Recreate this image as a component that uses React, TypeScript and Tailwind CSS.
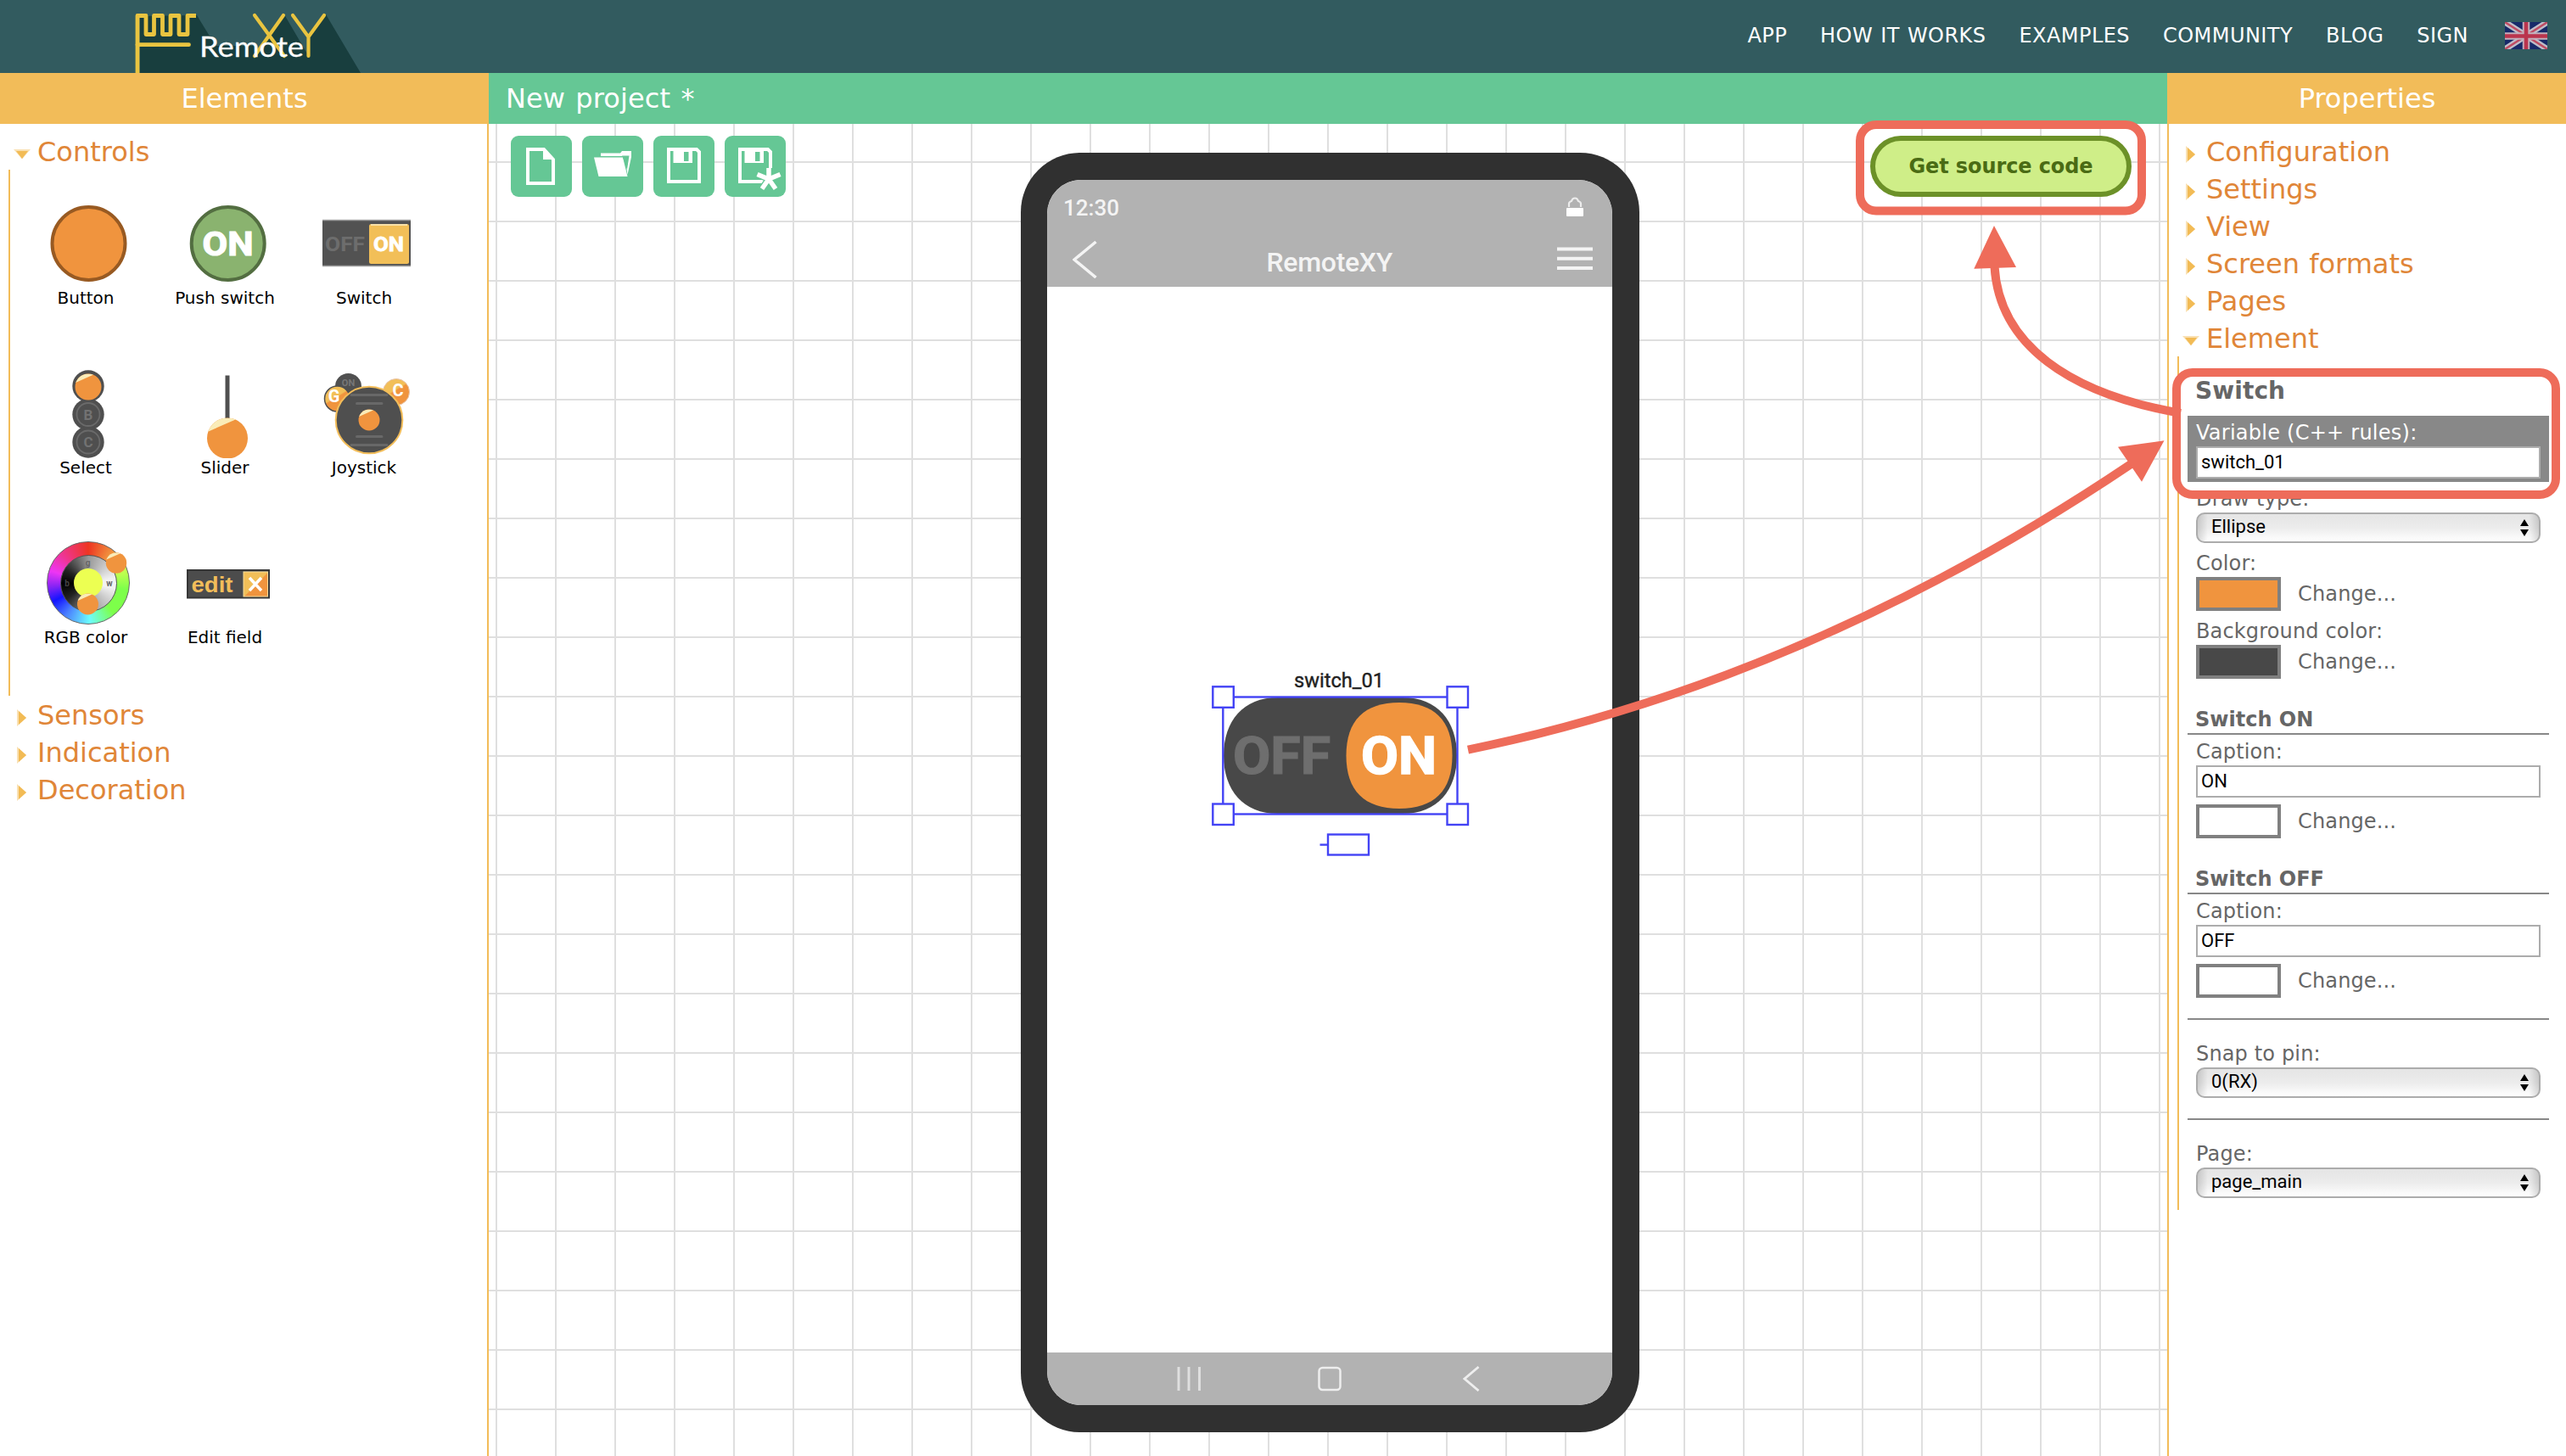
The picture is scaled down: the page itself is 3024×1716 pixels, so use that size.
import React from "react";

const ORANGE = "#f0943e";

function Logo() {
  return (
    <svg width="290" height="86" viewBox="150 0 290 86" className="block">
      <g fill="#183e3e">
        <path d="M165 19 L232 18 L254 54 L300 54 L305 60 L316 42 L300 18 L318 40 L335 17 L363 65 L363 44 L345 18 L365 41 L384 17 L425 86 L165 86 Z" />
      </g>
      <g fill="none" stroke="#e9c440" strokeWidth="4.8" strokeLinejoin="round">
        <path d="M162 86 V18.5 H172 V40.5 H181.5 V18.5 H191.5 V40.5 H201 V18.5 H211 V40.5 H221 V18.5 H231" />
        <path d="M162 52.7 H222.5" strokeLinecap="round" />
      </g>
      <g fill="none" stroke="#e9c440" strokeWidth="4.2" strokeLinecap="round">
        <path d="M300 18 L335 66 M334 18 L300 66" />
        <path d="M345 18 L363.5 43.5 L382 18 M363.5 43.5 V66" />
      </g>
      <text x="235" y="66.5" fontFamily="Lato, sans-serif" fontSize="33" fill="#fff" stroke="#fff" strokeWidth=".3" textLength="123" lengthAdjust="spacingAndGlyphs">Remote</text>
    </svg>
  );
}

function Flag() {
  return (
    <svg width="50" height="32" viewBox="0 0 50 32" className="block opacity-90">
      <rect width="50" height="32" fill="#15256b" />
      <path d="M0 0 L50 32 M50 0 L0 32" stroke="#cfc8d4" strokeWidth="7" />
      <path d="M0 0 L50 32 M50 0 L0 32" stroke="#cf4a63" strokeWidth="2.4" />
      <path d="M25 0 V32 M0 16.5 H50" stroke="#d3b9c6" strokeWidth="8.5" />
      <path d="M25 0 V32 M0 16.5 H50" stroke="#c9304c" strokeWidth="4.6" />
    </svg>
  );
}

function Section({ label, open = false }: { label: string; open?: boolean }) {
  return (
    <div className="flex h-[44px] items-start pl-4 text-[32px] leading-[44px] text-[#e08638]">
      <svg width="20" height="44" viewBox="0 0 20 44" className="mr-2 shrink-0">
        {open ? (
          <>
            <path d="M0 19 H20 L10 30.500 Z" fill="#f2bb55" opacity=".45" />
            <path d="M3 21 H17 L10 30 Z" fill="#f2bb55" />
          </>
        ) : (
          <>
            <path d="M4 15 L15 25 L4 35 Z" fill="#f2bb55" opacity=".45" />
            <path d="M6 17 L15 25 L6 33 Z" fill="#f2bb55" />
          </>
        )}
      </svg>
      <span className="whitespace-nowrap [word-spacing:1px]">{label}</span>
    </div>
  );
}

function Ball({ cx, cy, r, id }: { cx: number; cy: number; r: number; id: string }) {
  return (
    <g>
      <clipPath id={id}>
        <circle cx={cx} cy={cy} r={r} />
      </clipPath>
      <circle cx={cx} cy={cy} r={r} fill={ORANGE} />
      <path
        clipPath={`url(#${id})`}
        d={`M${cx - r} ${cy - r} H${cx + r * 0.6} L${cx + r * 0.3} ${cy - r * 0.88} L${cx - r} ${cy - r * 0.3} Z`}
        fill="#faecb8"
      />
    </g>
  );
}

const bold = { fontFamily: "Roboto, sans-serif", fontWeight: 700 } as const;

function IconBox({ children }: { children: React.ReactNode }) {
  return (
    <svg width="104" height="104" viewBox="0 0 104 104" className="block">
      {children}
    </svg>
  );
}

function ButtonIcon() {
  return (
    <IconBox>
      <circle cx="52.500" cy="51" r="43" fill={ORANGE} stroke="#985a22" strokeWidth="4" />
    </IconBox>
  );
}

function PushIcon() {
  return (
    <IconBox>
      <circle cx="52.700" cy="51" r="43" fill="#8ab36f" stroke="#536e41" strokeWidth="4" />
      <text x="22.500" y="65.300" {...bold} fontSize="39.500" fill="#fff" stroke="#fff" strokeWidth="1.200" textLength="60" lengthAdjust="spacingAndGlyphs">ON</text>
    </IconBox>
  );
}

function SwitchIcon() {
  return (
    <IconBox>
      <rect y="23" width="104" height="55" fill="#525252" />
      <path d="M0 23.500 H104 M0 77.500 H104" stroke="#a0a0a0" strokeWidth="1.500" />
      <text x="3" y="60" {...bold} fontSize="24" fill="#6d6d6d" textLength="47" lengthAdjust="spacingAndGlyphs">OFF</text>
      <rect x="55" y="28" width="47" height="47" rx="2.500" fill="#f2bf58" />
      <path d="M57 29 H100" stroke="#f9e2a8" strokeWidth="2" />
      <text x="60" y="60" {...bold} fontSize="24" fill="#fff" stroke="#fff" strokeWidth=".8" textLength="36" lengthAdjust="spacingAndGlyphs">ON</text>
    </IconBox>
  );
}

function SelectIcon() {
  return (
    <IconBox>
      <g fill="#4f4f4f">
        <circle cx="52" cy="19" r="18.700" />
        <circle cx="52" cy="52.500" r="18.700" />
        <circle cx="52" cy="85" r="18.700" />
      </g>
      <Ball cx={52} cy={20} r={15.5} id="sel" />
      <g fill="none" stroke="#6a6a6a" strokeWidth="1.800">
        <circle cx="52" cy="52.500" r="13.500" />
        <circle cx="52" cy="85" r="13.500" />
      </g>
      <g {...bold} fontSize="17" fill="#727272" textAnchor="middle">
        <text x="52" y="58.500">B</text>
        <text x="52" y="91">C</text>
      </g>
    </IconBox>
  );
}

function SliderIcon() {
  return (
    <IconBox>
      <rect x="49.500" y="6.500" width="5" height="52" fill="#505050" />
      <Ball cx={52} cy={80.500} r={24} id="sld" />
    </IconBox>
  );
}

function JoystickIcon() {
  return (
    <IconBox>
      <defs>
        <linearGradient id="amber" x1="0" y1="0" x2=".6" y2="1">
          <stop offset=".5" stopColor="#f2bf58" />
          <stop offset=".55" stopColor={ORANGE} />
        </linearGradient>
      </defs>
      <circle cx="30.500" cy="19.500" r="15.500" fill="#505050" />
      <text x="30.500" y="19" {...bold} fontSize="11" fill="#777" textAnchor="middle">ON</text>
      <circle cx="17.500" cy="34" r="15" fill="url(#amber)" stroke="#505050" strokeWidth="1.500" />
      <text x="13.500" y="38" {...bold} fontSize="20" fill="#fff" textAnchor="middle">G</text>
      <circle cx="87" cy="26" r="15.500" fill="url(#amber)" stroke="#e8c3a8" strokeWidth="1" />
      <text x="89" y="31" {...bold} fontSize="20" fill="#fff" textAnchor="middle">C</text>
      <circle cx="55" cy="59" r="39.300" fill="#4f4f4f" stroke="#f2bd5a" strokeWidth="2" />
      <path d="M34 29.500 H76 M40.500 39.500 H70 M40.500 78.500 H70 M34 88.500 H76" stroke="#686868" strokeWidth="3" strokeLinecap="round" />
      <Ball cx={55} cy={59} r={12.5} id="joy" />
    </IconBox>
  );
}

function RgbIcon() {
  return (
    <div className="grid size-[104px]">
      <div className="col-start-1 row-start-1 mt-[2px] ml-[3px] grid size-[98px] place-items-center rounded-full border border-[#666] bg-[conic-gradient(#ee3522,#f0943e_38deg,#c8ff50_70deg,#7dff4a_100deg,#7dff4a_140deg,#6cfcfc_178deg,#4a80ff_215deg,#1414ff_242deg,#8a24f4_265deg,#ee35f4_288deg,#ee3590_318deg,#ee3522)]">
        <div className="grid size-[67px] place-items-center rounded-full border border-[#555] bg-[conic-gradient(#999,#f2f2f2_80deg,#f2f2f2_100deg,#999_175deg,#222_235deg,#000_270deg,#222_300deg,#999)]">
          <div className="size-[34px] rounded-full bg-[#ecff52]" />
        </div>
      </div>
      <svg width="104" height="104" viewBox="0 0 104 104" className="col-start-1 row-start-1">
        <g {...bold} fontSize="10" textAnchor="middle">
          <text x="51.500" y="31" fill="#666">g</text>
          <text x="77" y="55" fill="#666">w</text>
          <text x="27" y="55" fill="#444">b</text>
        </g>
        <Ball cx={85} cy={27.500} r={12.2} id="rgb1" />
        <Ball cx={51.500} cy={76} r={12.5} id="rgb2" />
      </svg>
    </div>
  );
}

function EditIcon() {
  return (
    <IconBox>
      <defs>
        <linearGradient id="amber2" x1="0" y1="0" x2="1" y2="1">
          <stop offset=".5" stopColor="#f2bf58" />
          <stop offset=".53" stopColor={ORANGE} />
        </linearGradient>
      </defs>
      <rect x="5" y="36" width="96" height="32.500" fill="#4c4c4c" stroke="#363636" strokeWidth="2" />
      <text x="9.500" y="62" fontFamily="'Liberation Sans', sans-serif" fontWeight="700" fontSize="26" fill="#f2bd5a" textLength="49" lengthAdjust="spacingAndGlyphs">edit</text>
      <rect x="71" y="38" width="28.500" height="29" fill="url(#amber2)" stroke="#f8dd9a" strokeWidth="1" />
      <path d="M78 45 L92 60 M92 45 L78 60" stroke="#fff" strokeWidth="3.500" />
    </IconBox>
  );
}

const elements: { label: string; icon: React.ReactNode }[] = [
  { label: "Button", icon: <ButtonIcon /> },
  { label: "Push switch", icon: <PushIcon /> },
  { label: "Switch", icon: <SwitchIcon /> },
  { label: "Select", icon: <SelectIcon /> },
  { label: "Slider", icon: <SliderIcon /> },
  { label: "Joystick", icon: <JoystickIcon /> },
  { label: "RGB color", icon: <RgbIcon /> },
  { label: "Edit field", icon: <EditIcon /> },
];

function ElementsPanel() {
  return (
    <aside className="flex w-[576px] shrink-0 flex-col">
      <div className="h-[60px] bg-[#f2bc59] text-center text-[32px] leading-[60px] text-white">Elements</div>
      <div className="flex-1 border-r-2 border-[#f2bc59] bg-white pt-[11px]">
        <Section label="Controls" open />
        <div className="-mt-px ml-[10px] grid h-[620px] auto-rows-[200px] grid-cols-[repeat(3,164px)] content-start border-l-2 border-[#f2bc59] pl-[7px]">
          {elements.map((e) => (
            <div key={e.label} className="flex flex-col items-center pt-9">
              <div className="pl-[6px]">{e.icon}</div>
              <span className="text-[20px] leading-[22px] whitespace-nowrap text-black">{e.label}</span>
            </div>
          ))}
        </div>
        <div className="pt-px">
          <Section label="Sensors" />
          <Section label="Indication" />
          <Section label="Decoration" />
        </div>
      </div>
    </aside>
  );
}

function ToolButton({ children }: { children: React.ReactNode }) {
  return (
    <button className="size-[72px] rounded-[9px] bg-[#65c795]">
      <svg width="72" height="72" viewBox="0 0 72 72" className="block">
        {children}
      </svg>
    </button>
  );
}

function Floppy() {
  return (
    <>
      <path d="M18 16 H51 L54 19 V54 H18 Z" fill="none" stroke="#fff" strokeWidth="4" />
      <path d="M23.500 15 V32 H46 V15 Z" fill="#fff" />
      <rect x="36" y="19" width="5.500" height="11" fill="#65c795" />
    </>
  );
}

function Toolbar() {
  return (
    <div className="flex gap-3">
      <ToolButton>
        <path d="M20 16 H39 L50 28 V56 H20 Z" fill="none" stroke="#fff" strokeWidth="4" />
        <path d="M38 14 L52 28 H38 Z" fill="#fff" />
      </ToolButton>
      <ToolButton>
        <path d="M14 25.500 H48 L53.500 48 H19.500 Z" fill="#fff" />
        <path d="M22 20.500 H45 L47 18 H58 V25 L53.500 46 L50.500 25 L48 24 H22 Z" fill="#fff" />
        <path d="M47 23.500 H55.500 L53 40 L48 25.500 Z" fill="#65c795" />
      </ToolButton>
      <ToolButton>
        <Floppy />
      </ToolButton>
      <ToolButton>
        <Floppy />
        <path d="M52 38 V51 M38.500 45.500 L52 51 L65.500 45.500 M44 62 L52 51 L60 62" fill="none" stroke="#65c795" strokeWidth="8" />
        <path d="M52 38 V51 M38.500 45.500 L52 51 L65.500 45.500 M44 62.500 L52 51 L60 62.500" fill="none" stroke="#fff" strokeWidth="5.500" />
      </ToolButton>
    </div>
  );
}

function Phone() {
  return (
    <div className="absolute top-[34px] left-[626.5px] h-[1508px] w-[729px] rounded-[70px] bg-[#303030] py-8 pr-8 pl-[31.500px]">
      <div className="flex h-full flex-col overflow-hidden rounded-[40px] bg-white font-['Roboto',sans-serif] text-[#f4f4f4]">
        <div className="h-[126px] bg-[#b2b2b2] pt-[24px]">
          <div className="flex h-[37px] justify-between pr-[34px] pl-[19px]">
            <span className="-mt-[4px] text-[26px] leading-[27px] font-medium">12:30</span>
            <svg width="20" height="24" viewBox="0 0 20 24" className="-mt-[4px] block">
              <path d="M3 12 V8 Q3 6 6 5 Q7 1.500 10 1.500 Q13 1.500 14 5 Q17 6 17 8 V12" fill="none" stroke="#ececec" strokeWidth="2.200" />
              <rect y="13" width="20" height="10" rx="1" fill="#fff" />
            </svg>
          </div>
          <div className="flex h-[66px] justify-between pr-[23px] pl-[30px]">
            <svg width="30" height="55" viewBox="0 0 30 55" className="block">
              <path d="M27.500 12 L2 33 L27.500 54" fill="none" stroke="#f4f4f4" strokeWidth="3.500" />
            </svg>
            <span className="-mr-[5px] pt-[6px] text-[32px] leading-[60px] font-medium tracking-[-0.3px]">RemoteXY</span>
            <svg width="42" height="50" viewBox="0 0 42 50" className="block">
              <path d="M0 20.500 H42 M0 31.700 H42 M0 43 H42" stroke="#f4f4f4" strokeWidth="4" />
            </svg>
          </div>
        </div>
        <div className="flex-1 pt-[483px] pl-[188px]">
          <SwitchWidget />
        </div>
        <div className="flex h-[62px] items-center justify-between bg-[#b2b2b2] pr-[156px] pl-[152px]">
          <svg width="30" height="30" viewBox="0 0 30 30" className="block">
            <path d="M3 1 V29 M15 1 V29 M27.500 1 V29" stroke="#dfdfdf" strokeWidth="3" />
          </svg>
          <svg width="28" height="30" viewBox="0 0 28 30" className="mr-[6px] block">
            <rect x="1.500" y="2" width="25" height="26" rx="4" fill="none" stroke="#eee" strokeWidth="2.500" />
          </svg>
          <svg width="20" height="30" viewBox="0 0 20 30" className="block">
            <path d="M18.500 1 L2 15 L18.500 29" fill="none" stroke="#eee" strokeWidth="2.800" />
          </svg>
        </div>
      </div>
    </div>
  );
}

function SwitchWidget() {
  return (
    <svg width="310" height="230" viewBox="1422 785 310 230" className="-mt-[36px] block">
      <text x="1525" y="810" fontFamily="Roboto, sans-serif" fontSize="24.500" fill="#222" stroke="#222" strokeWidth=".4" textLength="106" lengthAdjust="spacingAndGlyphs">switch_01</text>
      <path d="M1506 822 H1653 C1694 822 1717 850 1717 890.500 C1717 931 1694 959 1653 959 H1506 C1465 959 1442 931 1442 890.500 C1442 850 1465 822 1506 822 Z" fill="#484848" />
      <path d="M1649 828 C1690 828 1711.500 849 1711.500 890.500 C1711.500 932 1690 953 1649 953 C1608 953 1586.500 932 1586.500 890.500 C1586.500 849 1608 828 1649 828 Z" fill={ORANGE} />
      <text x="1453" y="912.300" {...bold} fontSize="62" fill="#6e6e6e" stroke="#6e6e6e" strokeWidth="1.200" textLength="115" lengthAdjust="spacingAndGlyphs">OFF</text>
      <text x="1604" y="912.300" {...bold} fontSize="62" fill="#fff" stroke="#fff" strokeWidth="1.500" textLength="89" lengthAdjust="spacingAndGlyphs">ON</text>
      <g fill="none" stroke="#4343f5" strokeWidth="2.400">
        <rect x="1441.300" y="821.500" width="276.200" height="138" />
        <g fill="#fff">
          <rect x="1429.300" y="809.300" width="24.500" height="24.500" />
          <rect x="1705.500" y="809.300" width="24.500" height="24.500" />
          <rect x="1429.300" y="947.500" width="24.500" height="24.500" />
          <rect x="1705.500" y="947.500" width="24.500" height="24.500" />
          <rect x="1565" y="983.500" width="48" height="24" />
        </g>
        <path d="M1555.500 995.600 H1565" />
      </g>
    </svg>
  );
}

function Canvas() {
  return (
    <main className="flex flex-1 flex-col">
      <div className="h-[60px] bg-[#65c795] pl-5 text-[32px] leading-[60px] tracking-[0.1px] text-white [word-spacing:2px]">New project *</div>
      <div className="relative flex-1 bg-white bg-[linear-gradient(to_right,#dfdfdf_2px,transparent_2px),linear-gradient(to_bottom,#dfdfdf_2px,transparent_2px)] bg-[size:70px_70px] bg-[position:8px_44px]">
        <div className="flex items-start justify-between pt-[14px] pr-[42px] pl-[26px]">
          <Toolbar />
          <button className="h-[72px] w-[308px] rounded-full border-[6px] border-[#6c9128] bg-[#cfee88] text-[24px] leading-[28px] font-bold tracking-[-0.1px] text-[#4a6b14]">
            Get source code
          </button>
        </div>
        <Phone />
      </div>
    </main>
  );
}

function Label({ children }: { children: React.ReactNode }) {
  return <div className="pl-[10px] text-[24px] leading-[28px] tracking-[0.15px] whitespace-nowrap text-[#666]">{children}</div>;
}

function Field({ value }: { value: string }) {
  return (
    <div className="mx-[10px] h-[38px] border-2 border-[#acacac] bg-white pl-1 font-['Roboto',sans-serif] text-[22px] leading-[33px] text-black">
      {value}
    </div>
  );
}

function Select({ value }: { value: string }) {
  return (
    <div className="mx-[10px] flex h-[36px] items-center justify-between rounded-[10px] border-2 border-[#acacac] bg-[linear-gradient(to_right,rgba(0,0,0,0.14),transparent_12px,transparent_calc(100%-12px),rgba(0,0,0,0.14)),linear-gradient(to_bottom,#e5e5e5,#ececec_50%,#fff)] pr-3 pl-4 font-['Roboto',sans-serif] text-[22px] leading-[32px] text-black">
      <span className="-mt-[3px]">{value}</span>
      <svg width="10" height="20" viewBox="0 0 10 20" className="block">
        <path d="M0 8 L5 0 L10 8 Z M0 12 L5 20 L10 12 Z" fill="#000" />
      </svg>
    </div>
  );
}

function Swatch({ color }: { color: string }) {
  return (
    <div className="flex h-[40px] items-center gap-5 pl-[10px] text-[24px] leading-[28px] tracking-[0.15px] text-[#666]">
      <div className="h-[40px] w-[100px] border-4 border-[#808080]" style={{ backgroundColor: color }} />
      <span>Change...</span>
    </div>
  );
}

function Caption({ title, value }: { title: string; value: string }) {
  return (
    <div className="pt-[34px]">
      <div className="h-[32px] border-b-2 border-[#888] pl-[9px] text-[24px] leading-[28px] font-bold text-[#666]">{title}</div>
      <div className="pt-[6px] pb-[2px]">
        <Label>Caption:</Label>
      </div>
      <Field value={value} />
      <div className="pt-2">
        <Swatch color="#ffffff" />
      </div>
    </div>
  );
}

function PropertiesPanel() {
  return (
    <aside className="flex w-[470px] shrink-0 flex-col">
      <div className="h-[60px] bg-[#f2bc59] pl-px text-center text-[32px] leading-[60px] text-white">Properties</div>
      <div className="flex-1 border-l-2 border-[#f2bc59] bg-white pt-[11px]">
        <Section label="Configuration" />
        <Section label="Settings" />
        <Section label="View" />
        <Section label="Screen formats" />
        <Section label="Pages" />
        <Section label="Element" open />
        <div className="-mt-px mr-5 ml-[10px] border-l-2 border-[#f2bc59] pt-6 pb-[14px] pl-[10px]">
          <div className="pl-[9px] text-[28px] leading-[34px] font-bold tracking-[0.1px] text-[#666]">Switch</div>
          <div className="mt-3 h-[78px] bg-[#888] pt-[6px]">
            <div className="mb-[2px] pl-[10px] text-[24px] leading-[28px] tracking-[0.25px] text-white">Variable (C++ rules):</div>
            <Field value="switch_01" />
          </div>
          <div className="pt-[6px] pb-[2px]">
            <Label>Draw type:</Label>
          </div>
          <Select value="Ellipse" />
          <div className="pt-[10px] pb-[2px]">
            <Label>Color:</Label>
          </div>
          <Swatch color={ORANGE} />
          <div className="pt-[10px] pb-[2px]">
            <Label>Background color:</Label>
          </div>
          <Swatch color="#484848" />
          <Caption title="Switch ON" value="ON" />
          <Caption title="Switch OFF" value="OFF" />
          <div className="mt-6 border-t-2 border-[#888] pt-[26px] pb-[2px]">
            <Label>Snap to pin:</Label>
          </div>
          <Select value="0(RX)" />
          <div className="mt-6 border-t-2 border-[#888] pt-[26px] pb-[2px]">
            <Label>Page:</Label>
          </div>
          <Select value="page_main" />
        </div>
      </div>
    </aside>
  );
}

function Annotations() {
  return (
    <svg width="3024" height="1716" viewBox="0 0 3024 1716" className="pointer-events-none absolute top-0 left-0">
      <g fill="none" stroke="#ee6c5a" strokeWidth="10">
        <rect x="2192" y="147" width="332" height="101.500" rx="19" />
        <rect x="2565" y="439" width="447" height="144" rx="19" />
        <path d="M2350.500 314 C2356 406 2438 464 2570 487" />
        <path d="M1730 883.700 C2000 828 2260 716 2512 546.500" />
      </g>
      <g fill="#ee6c5a">
        <path d="M2350 266 L2326.300 316.700 L2376 315 Z" />
        <path d="M2550.500 519.300 L2496 526.700 L2524 567.700 Z" />
      </g>
    </svg>
  );
}

const nav = ["APP", "HOW IT WORKS", "EXAMPLES", "COMMUNITY", "BLOG", "SIGN"];

export default function App() {
  return (
    <div className="relative flex h-[1716px] w-[3024px] flex-col overflow-hidden bg-white font-['DejaVu_Sans',sans-serif]">
      <header className="flex h-[86px] shrink-0 items-start justify-between bg-[#325b5f] pr-[22px] pl-[150px]">
        <Logo />
        <nav className="flex gap-[39px] pt-[28px] text-[24px] leading-[28px] tracking-[0.45px] whitespace-nowrap text-white [word-spacing:1px]">
          {nav.map((n) => (
            <a key={n}>{n}</a>
          ))}
          <div className="-mt-[2px] ml-[4px]">
            <Flag />
          </div>
        </nav>
      </header>
      <div className="flex flex-1">
        <ElementsPanel />
        <Canvas />
        <PropertiesPanel />
      </div>
      <Annotations />
    </div>
  );
}
